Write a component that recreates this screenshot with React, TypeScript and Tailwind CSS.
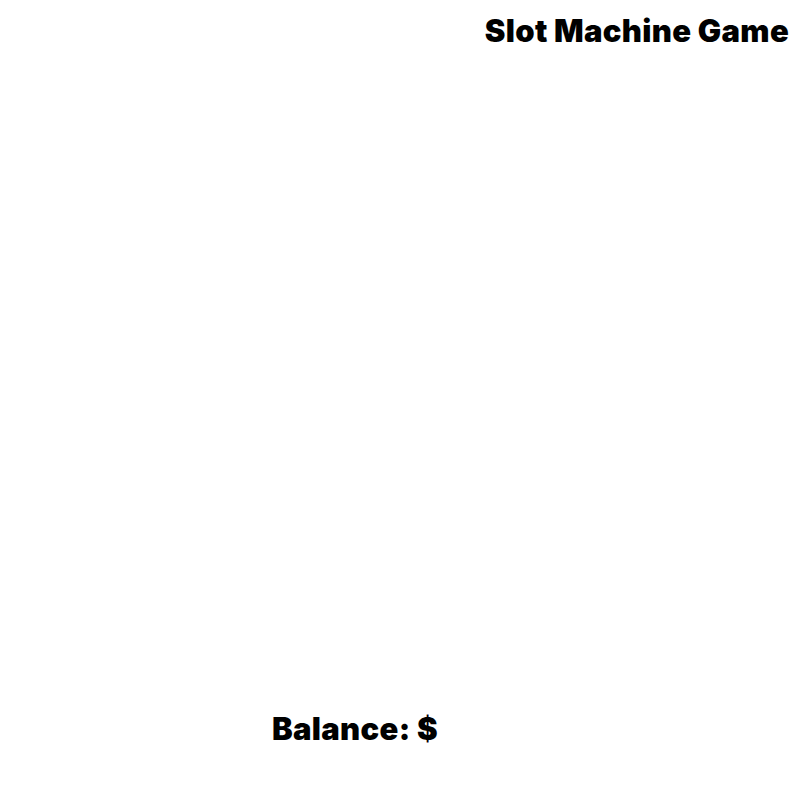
import { useState } from "react";

const App = () => {
  const [reels] = useState<string[]>([]);
  const [balance] = useState<string>("");

  return (
    <div className="min-h-screen bg-white text-black font-['Inter','Liberation_Sans',sans-serif]">
      <div className="flex flex-col h-[800px]">
        <div className="flex justify-end pt-[13px] pr-[11px]">
          <h1 className="text-[31px] leading-9 font-black tracking-[0.01em]">Slot Machine Game</h1>
        </div>
        <div className="flex-1 flex items-center justify-center gap-4">
          {reels.map((symbol, i) => (
            <div key={i} className="text-5xl">
              {symbol}
            </div>
          ))}
        </div>
        <div className="pl-[272px] pb-[53px]">
          <h2 className="text-[31px] leading-9 font-black tracking-[0.01em]">Balance: ${balance}</h2>
        </div>
      </div>
    </div>
  );
};

export default App;
